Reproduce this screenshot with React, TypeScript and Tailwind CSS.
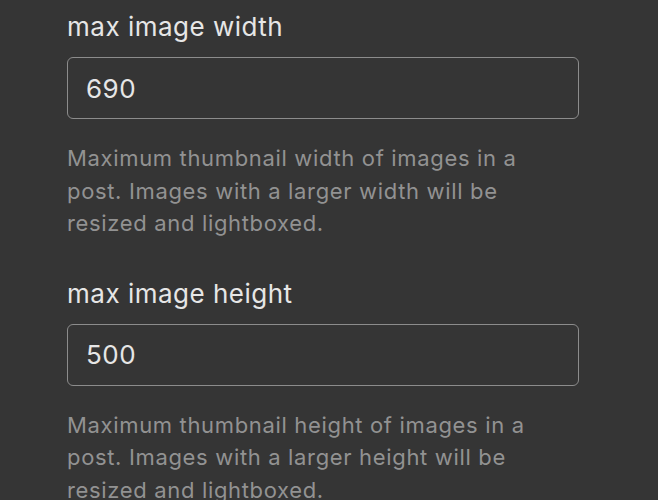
import React from 'react';

const FIELDS = [
  {
    id: 'max_image_width',
    label: 'max image width',
    value: '690',
    help: 'Maximum thumbnail width of images in a post. Images with a larger width will be resized and lightboxed.',
  },
  {
    id: 'max_image_height',
    label: 'max image height',
    value: '500',
    help: 'Maximum thumbnail height of images in a post. Images with a larger height will be resized and lightboxed.',
  },
];

export default function App() {
  return (
    <div
      className="h-[500px] overflow-hidden bg-[#353535] pl-[67px] pt-[9px]"
      style={{ fontFamily: 'Inter, "Noto Sans", sans-serif' }}
    >
      <div className="flex flex-col gap-[36px] w-[512px]">
        {FIELDS.map((f) => (
          <div key={f.id} className="flex flex-col">
            {/* Label */}
            <label className="text-[26px] leading-[36px] tracking-[0.5px] text-[#e6e6e6]">{f.label}</label>

            {/* Input */}
            <input
              defaultValue={f.value}
              className="mt-[12px] h-[62px] w-full rounded-[6px] border border-[#8c8c8c] bg-transparent px-[18px] text-[26px] tracking-[0.5px] text-[#e6e6e6] outline-none"
            />

            {/* Help text */}
            <p className="mt-[23px] max-w-[480px] text-[22px] leading-[32.5px] tracking-[0.66px] text-[#929292]">
              {f.help}
            </p>
          </div>
        ))}
      </div>
    </div>
  );
}
